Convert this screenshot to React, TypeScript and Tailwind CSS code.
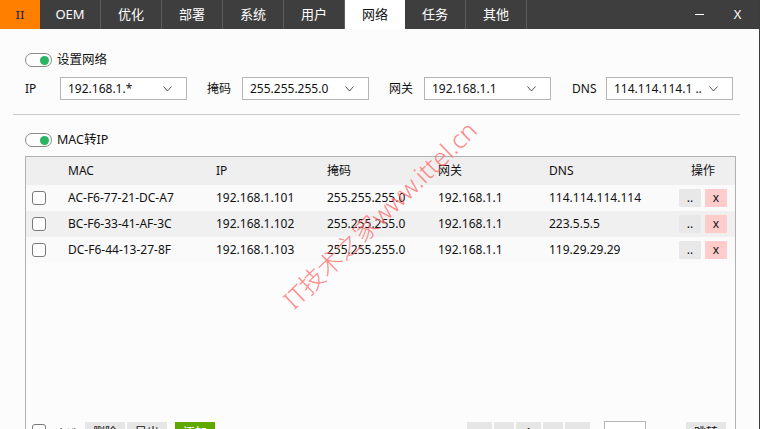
import React from "react";

const FONT = '"Noto Sans", "Noto Sans CJK SC", sans-serif';

function Toggle() {
  return (
    <div className="w-[27px] h-[14px] rounded-full border border-[#8a8a8a] bg-white flex items-center justify-end pr-[2px]">
      <div className="w-[9px] h-[9px] rounded-full bg-[#27b563]" />
    </div>
  );
}

function Select({ value }: { value: string }) {
  return (
    <div className="w-[127px] h-[23px] border border-[#b4b4b4] bg-white flex items-center pl-[7px] pr-[14px]">
      <span className="flex-1 text-[#111]">{value}</span>
      <svg width="9" height="6" viewBox="0 0 9 6" className="text-[#555]">
        <path d="M0.5 0.5 L4.5 5 L8.5 0.5" fill="none" stroke="currentColor" strokeWidth="1" />
      </svg>
    </div>
  );
}

function Check() {
  return <div className="w-[14px] h-[14px] rounded-[3px] border border-[#7a7a7a] bg-white" />;
}

const rows = [
  { mac: "AC-F6-77-21-DC-A7", ip: "192.168.1.101", mask: "255.255.255.0", gw: "192.168.1.1", dns: "114.114.114.114", bg: "bg-[#fafafa]" },
  { mac: "BC-F6-33-41-AF-3C", ip: "192.168.1.102", mask: "255.255.255.0", gw: "192.168.1.1", dns: "223.5.5.5", bg: "bg-[#f0f0f0]" },
  { mac: "DC-F6-44-13-27-8F", ip: "192.168.1.103", mask: "255.255.255.0", gw: "192.168.1.1", dns: "119.29.29.29", bg: "bg-[#fafafa]" },
];

const grid = "grid grid-cols-[42px_148px_111px_111px_111px_130px_1fr] items-center";

export default function App() {
  const tabs = ["OEM", "优化", "部署", "系统", "用户", "网络", "任务", "其他"];
  return (
    <div
      className="relative w-[760px] h-[429px] overflow-hidden bg-[#fcfcfc] text-[12px] text-[#111] border-r border-[#3c3c3c]"
      style={{ fontFamily: FONT }}
    >
      {/* Tab bar */}
      <div className="h-[29px] bg-[#3e3e3e] flex items-stretch text-[13px] text-white">
        <div className="w-[40px] bg-[#ff8000] flex items-center justify-center text-[#222] font-serif">II</div>
        {tabs.map((t) => (
          <div
            key={t}
            className={
              t === "网络"
                ? "w-[60px] bg-white text-[#111] flex items-center justify-center"
                : "w-[61px] border-r border-[#5e5e5e] flex items-center justify-center"
            }
          >
            {t}
          </div>
        ))}
        <div className="flex-1" />
        <div className="w-[40px] flex items-center justify-center">
          <div className="w-[9px] h-[1px] bg-white" />
        </div>
        <div className="w-[40px] flex items-center justify-center pr-[3px] text-[13px]">X</div>
      </div>

      {/* Body */}
      <div className="px-[13px]">
        <div className="px-[12px]">
          <div className="flex items-center gap-[5px] mt-[24px] h-[14px]">
            <Toggle />
            <span className="text-[12.5px]">设置网络</span>
          </div>
          <div className="flex items-center mt-[10px] h-[23px]">
            <span className="w-[35px]">IP</span>
            <Select value="192.168.1.*" />
            <span className="ml-[20px] w-[35px]">掩码</span>
            <Select value="255.255.255.0" />
            <span className="ml-[20px] w-[35px]">网关</span>
            <Select value="192.168.1.1" />
            <span className="ml-[21px] w-[34px]">DNS</span>
            <Select value="114.114.114.1 .." />
          </div>
        </div>
        <div className="mt-[14px] h-[1px] bg-[#c8c8c8] mr-[6px]" />
        <div className="px-[12px]">
          <div className="flex items-center gap-[5px] mt-[18px] h-[14px]">
            <Toggle />
            <span className="text-[12.5px]">MAC转IP</span>
          </div>

          {/* Table */}
          <div className="mt-[9px] w-[711px] h-[300px] border border-[#b0b0b0] border-b-0 bg-[#fcfcfc]">
            <div className={`${grid} h-[28px] bg-[#efefef]`}>
              <div />
              <div>MAC</div>
              <div>IP</div>
              <div>掩码</div>
              <div>网关</div>
              <div>DNS</div>
              <div className="pl-[12px]">操作</div>
            </div>
            {rows.map((r) => (
              <div key={r.mac} className={`${grid} h-[26px] ${r.bg}`}>
                <div className="pl-[6px]">
                  <Check />
                </div>
                <div>{r.mac}</div>
                <div>{r.ip}</div>
                <div>{r.mask}</div>
                <div>{r.gw}</div>
                <div>{r.dns}</div>
                <div className="flex gap-[4px]">
                  <div className="w-[22px] h-[18px] bg-[#e8e8e8] flex items-end justify-center pb-[3px] leading-none">..</div>
                  <div className="w-[22px] h-[18px] bg-[#ffcccc] flex items-center justify-center leading-none">x</div>
                </div>
              </div>
            ))}
            <div className="h-[159px]" />
            {/* Footer */}
            <div className="flex items-start h-[26px]">
              <div className="ml-[6px] mt-[2px]">
                <Check />
              </div>
              <span className="ml-[9px] w-[30px] mt-[4px]">全选</span>
              <div className="w-[40px] h-[22px] bg-[#e6e6e6] flex items-center justify-center">删除</div>
              <div className="ml-[2px] w-[40px] h-[22px] bg-[#e6e6e6] flex items-center justify-center">导出</div>
              <div className="ml-[8px] w-[40px] h-[22px] bg-[#5fa800] text-white flex items-center justify-center">添加</div>
              <div className="flex-1" />
              <div className="w-[25px] h-[22px] bg-[#e6e6e6] flex items-center justify-center">«</div>
              <div className="ml-[2px] w-[20px] h-[22px] bg-[#e6e6e6] flex items-center justify-center">‹</div>
              <div className="ml-[2px] w-[25px] h-[22px] bg-[#e6e6e6] flex items-center justify-center">1</div>
              <div className="ml-[2px] w-[20px] h-[22px] bg-[#e6e6e6] flex items-center justify-center">›</div>
              <div className="ml-[2px] w-[25px] h-[22px] bg-[#e6e6e6] flex items-center justify-center">»</div>
              <div className="ml-[14px] -mt-[1px] w-[42px] h-[23px] border border-[#b4b4b4] bg-white" />
              <span className="ml-[17px] w-[23px] mt-[4px]">页</span>
              <div className="w-[40px] h-[22px] bg-[#e6e6e6] flex items-center justify-center">跳转</div>
              <div className="w-[9px]" />
            </div>
          </div>
        </div>
      </div>

      {/* Watermark */}
      <div
        className="absolute left-[380px] top-[215px] -translate-x-1/2 -translate-y-1/2 -rotate-[44deg] whitespace-nowrap text-[25px] text-[#ff6b6b]/80 font-light pointer-events-none"
        style={{ fontFamily: '"Noto Sans", "Noto Sans CJK SC", sans-serif' }}
      >
        IT技术之家www.ittel.cn
      </div>
    </div>
  );
}
